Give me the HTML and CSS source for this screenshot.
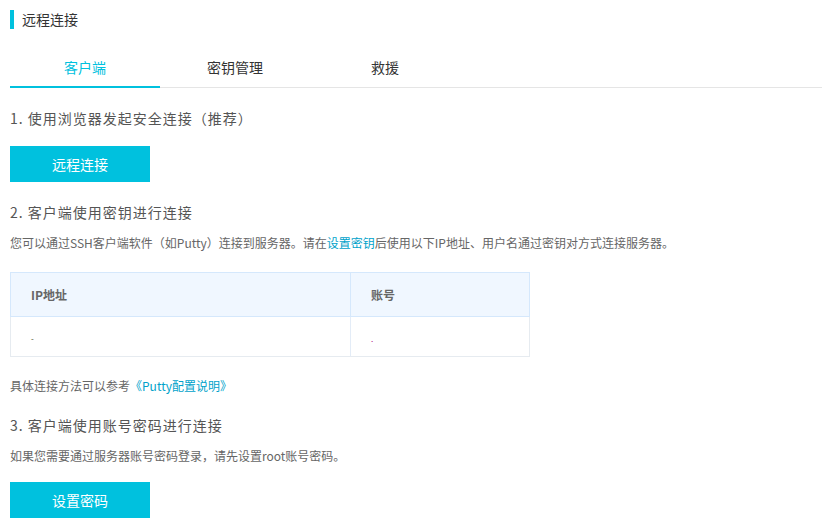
FILE: index.html
```html
<!DOCTYPE html>
<html lang="zh-CN">
<head>
<meta charset="utf-8">
<title>远程连接</title>
<link rel="stylesheet" href="styles.css">
</head>
<body>
<div class="page">
  <div class="title">远程连接</div>
  <div class="tabs">
    <div class="tab active">客户端</div>
    <div class="tab">密钥管理</div>
    <div class="tab">救援</div>
  </div>

  <h3 class="step step-1">1.&nbsp;使用浏览器发起安全连接（推荐）</h3>
  <button class="btn btn-1">远程连接</button>

  <h3 class="step step-2">2.&nbsp;客户端使用密钥进行连接</h3>
  <p class="text text-2">您可以通过SSH客户端软件（如Putty）连接到服务器。请在<a class="link">设置密钥</a>后使用以下IP地址、用户名通过密钥对方式连接服务器。</p>

  <table class="info">
    <thead>
      <tr><th class="col-ip">IP地址</th><th class="col-user">账号</th></tr>
    </thead>
    <tbody>
      <tr><td><span class="mask">-</span></td><td><span class="mask small">.</span></td></tr>
    </tbody>
  </table>

  <p class="text text-ref">具体连接方法可以参考<a class="link">《Putty配置说明》</a></p>

  <h3 class="step step-3">3.&nbsp;客户端使用账号密码进行连接</h3>
  <p class="text text-3">如果您需要通过服务器账号密码登录，请先设置root账号密码。</p>
  <button class="btn btn-2">设置密码</button>
</div>
</body>
</html>
```

FILE: styles.css
```css
* { box-sizing: border-box; }
html, body { margin: 0; padding: 0; background: #fff; }
body {
  font-family: "Noto Sans CJK SC", "Noto Sans", "Liberation Sans", sans-serif;
  color: #333;
}
.page {
  padding: 10px 0 0 10px;
  display: flex;
  flex-direction: column;
  align-items: flex-start;
}
.title {
  border-left: 4px solid #00c1de;
  padding-left: 8px;
  height: 19px;
  line-height: 19px;
  font-size: 14px;
  color: #333;
}
.tabs {
  margin-top: 19px;
  align-self: stretch;
  display: flex;
  border-bottom: 1px solid #e5e5e5;
}
.tab {
  width: 150px;
  height: 40px;
  line-height: 38px;
  text-align: center;
  font-size: 14px;
  color: #333;
  margin-bottom: -1px;
  border-bottom: 2px solid transparent;
}
.tab.active {
  color: #00c1de;
  border-bottom-color: #00c1de;
}
.step {
  margin: 0;
  font-size: 14px;
  font-weight: normal;
  line-height: 20px;
  color: #555;
  letter-spacing: 1px;
}
.step-1 { margin-top: 20px; }
.step-2 { margin-top: 20px; }
.step-3 { margin-top: 20px; }
.btn {
  width: 140px;
  height: 36px;
  border: 0;
  padding: 0;
  background: #00c1de;
  color: #fff;
  font-family: inherit;
  font-size: 14px;
}
.btn-1 { margin-top: 18px; }
.btn-2 { margin-top: 17px; }
.text {
  margin: 0;
  font-size: 12px;
  line-height: 18px;
  color: #666;
}
.text-2 { margin-top: 12px; }
.text-ref { margin-top: 20px; }
.text-3 { margin-top: 12px; }
.link { color: #00a2ca; text-decoration: none; }
.info {
  margin-top: 20px;
  width: 520px;
  border-collapse: collapse;
  font-size: 12px;
}
.info th {
  height: 44px;
  background: #f0f7ff;
  border: 1px solid #d5e8fc;
  text-align: left;
  padding: 0 0 0 20px;
  color: #666;
  font-weight: bold;
}
.info .col-ip { width: 340px; }
.info td {
  height: 40px;
  border: 1px solid #e6ebf0;
  padding: 0 0 0 20px;
  color: #333;
}
.info tbody tr td:first-child { border-right-color: #e3ecf7; }
.mask { font-size: 8px; color: #442; }
.mask.small { color: #a07; }
```
